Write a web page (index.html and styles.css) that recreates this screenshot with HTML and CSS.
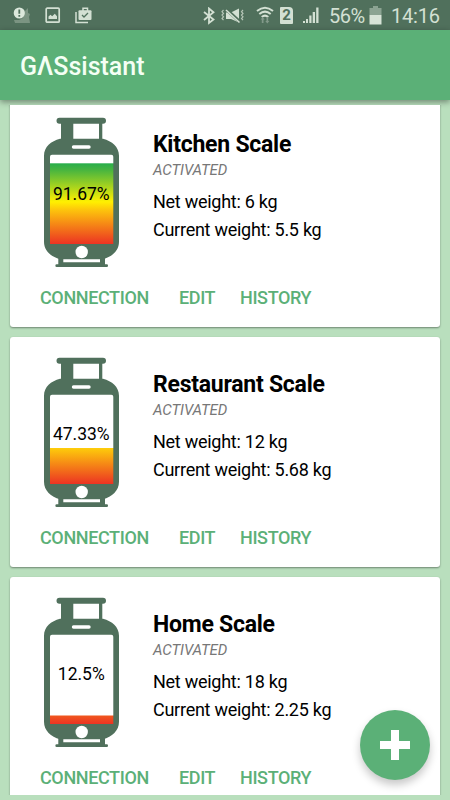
FILE: index.html
```html
<!DOCTYPE html>
<html lang="en">
<head>
  <meta charset="UTF-8" />
  <meta name="viewport" content="width=device-width, initial-scale=1.0"/>
  <title>GΛSsistant</title>
  <link rel="stylesheet" href="styles.css">
</head>
<body>
  <!-- shared shapes -->
  <svg class="defs" width="0" height="0">
    <defs>
      <linearGradient id="level" gradientUnits="userSpaceOnUse" x1="0" y1="46" x2="0" y2="127">
        <stop offset="0" stop-color="#27ad4c"/>
        <stop offset="0.08" stop-color="#45b440"/>
        <stop offset="0.48" stop-color="#fff000"/>
        <stop offset="0.58" stop-color="#fdc40c"/>
        <stop offset="1" stop-color="#ec3323"/>
      </linearGradient>
      <g id="bottle">
        <path fill="#50705c" d="M16.5 .7h43.5a3 3 0 0 1 0 6h-.7v16h-3.3v-16h-25.7v16h-12.300v-16h-1.500a3 3 0 0 1 0-6z"/>
        <path fill="#50705c" fill-rule="evenodd" d="M17 21.700h43c9 2.500 16 8 16 17v86c0 9-7 15-16 17.600h-43c-9-2.600-16-8.600-16-17.600v-86c0-9 7-14.500 16-17z
          M30.500 28.300a1.700 1.700 0 0 0 0 3.400h15.500a1.700 1.700 0 0 0 0-3.400z
          M9 37.700a2 2 0 0 0-2 2v87.300h63.300v-87.300a2 2 0 0 0-2-2z"/>
        <path fill="#50705c" d="M15.300 141h5v4.300h36.700v-4.300h5v6.300h1.700a1.300 1.300 0 0 1 0 2.700h-50a1.300 1.300 0 0 1 0-2.700h1.600z"/>
        <circle cx="38.700" cy="135" r="6.200" fill="#fff"/>
      </g>
    </defs>
  </svg>

  <div class="statusbar">
    <svg class="notify" width="18" height="18" viewBox="0 0 18 18">
      <path fill="#7b9482" d="M1 13h5l4-2 1-6 4-4v5l2 1-1 3 1 6H2z"/>
      <circle cx="6.300" cy="6" r="5.600" fill="#dce8dc"/>
      <path stroke="#50705c" stroke-width="1.800" d="M6.300 2.500v4.300M6.300 8v1.700"/>
    </svg>
    <svg class="picture" width="16" height="17" viewBox="0 0 16 17">
      <rect x="1.200" y="1.200" width="13" height="14" rx="1" fill="none" stroke="#d3e0d3" stroke-width="1.700"/>
      <path fill="#d3e0d3" d="M3.500 12V9.500l2-1.700 1.700 1.500 2.600-2.500 2.200 2.500V12z"/>
    </svg>
    <svg class="store" width="17" height="17" viewBox="0 0 17 17">
      <path fill="none" stroke="#d3e0d3" stroke-width="1.500" d="M1 5v10.500h12M8 4V1.300h4.500V4"/>
      <rect x="3.500" y="3.300" width="13" height="9.700" rx="1" fill="#d3e0d3"/>
      <path fill="none" stroke="#50705c" stroke-width="1.300" d="M7 8l2 2 4-4"/>
    </svg>
    <svg class="bluetooth" width="12" height="18" viewBox="0 0 12 18">
      <path fill="none" stroke="#d3e0d3" stroke-width="1.800" d="M1 5l9.500 7.500L6 16V1.500l4.500 3.800L1 13"/>
    </svg>
    <svg class="mute" width="24" height="16" viewBox="0 0 24 16">
      <path fill="none" stroke="#b5c6b7" stroke-width="1.200" d="M2.500 2l-1.500 1.700 1.500 1.700-1.500 1.700 1.500 1.700-1.500 1.700 1.500 1.700M22 2l-1.500 1.700 1.500 1.700-1.500 1.700 1.500 1.700-1.500 1.700 1.500 1.700"/>
      <path fill="#d3e0d3" d="M5 4.500h5L18 .5v14L10 11H5z"/>
      <path stroke="#50705c" stroke-width="3.200" d="M5.500 1.500L19 14"/>
      <path stroke="#d3e0d3" stroke-width="1.600" d="M5 2L18.500 14.500"/>
    </svg>
    <svg class="wifi" width="18" height="19" viewBox="0 0 18 19">
      <path fill="none" stroke="#d3e0d3" stroke-width="2" d="M1 5q8-6.500 16 0M3.300 8q5.700-4.700 11.400 0M5.700 11q3.300-2.700 6.600 0"/>
      <path fill="#82998a" d="M6.700 11l2 2.500h-1.200V17h-1.700v-3.500h-1.200zM11.300 17.500l-2-2.500h1.200v-4h1.700v4h1.200z"/>
    </svg>
    <span class="sim">2</span>
    <svg class="signal" width="17" height="17" viewBox="0 0 17 17">
      <path fill="#d3e0d3" d="M1 14h2v2H1zM4 12h2v4H4zM7.300 8.500h2.200V16H7.300zM10.700 5H13v11h-2.300zM14.200 .5h2.300V16h-2.300z"/>
    </svg>
    <span class="percent">56%</span>
    <svg class="battery" width="13" height="19" viewBox="0 0 13 19">
      <path fill="#8ba392" d="M4 0h5v2h3.500v7H.5V2H4z"/>
      <path fill="#d7e3d7" d="M.5 9h12v9.500H.5z"/>
    </svg>
    <span class="clock">14:16</span>
  </div>

  <header class="toolbar">
    <h1>GΛSsistant</h1>
  </header>

  <main class="list">
    <section class="card">
      <div class="info">
        <svg class="gas" width="77" height="152" viewBox="0 0 77 152">
          <rect x="6" y="46.300" width="65" height="81" fill="url(#level)"/>
          <use href="#bottle"/>
          <text x="38.300" y="82.700">91.67%</text>
        </svg>
        <div class="details">
          <h2>Kitchen Scale</h2>
          <p class="state">ACTIVATED</p>
          <p>Net weight: 6 kg</p>
          <p>Current weight: 5.5 kg</p>
        </div>
      </div>
      <div class="actions">
        <a class="connection">CONNECTION</a>
        <a class="edit">EDIT</a>
        <a>HISTORY</a>
      </div>
    </section>

    <section class="card">
      <div class="info">
        <svg class="gas" width="77" height="152" viewBox="0 0 77 152">
          <rect x="6" y="91" width="65" height="36.300" fill="url(#level)"/>
          <use href="#bottle"/>
          <text x="38.300" y="82.700">47.33%</text>
        </svg>
        <div class="details">
          <h2>Restaurant Scale</h2>
          <p class="state">ACTIVATED</p>
          <p>Net weight: 12 kg</p>
          <p>Current weight: 5.68 kg</p>
        </div>
      </div>
      <div class="actions">
        <a class="connection">CONNECTION</a>
        <a class="edit">EDIT</a>
        <a>HISTORY</a>
      </div>
    </section>

    <section class="card">
      <div class="info">
        <svg class="gas" width="77" height="152" viewBox="0 0 77 152">
          <rect x="6" y="118.500" width="65" height="8.800" fill="url(#level)"/>
          <use href="#bottle"/>
          <text x="38.300" y="82.700">12.5%</text>
        </svg>
        <div class="details">
          <h2>Home Scale</h2>
          <p class="state">ACTIVATED</p>
          <p>Net weight: 18 kg</p>
          <p>Current weight: 2.25 kg</p>
        </div>
      </div>
      <div class="actions">
        <a class="connection">CONNECTION</a>
        <a class="edit">EDIT</a>
        <a>HISTORY</a>
      </div>
    </section>
  </main>

  <button class="fab" aria-label="Add scale">
    <svg width="30" height="30" viewBox="0 0 30 30">
      <path fill="#fff" d="M11 0h8v11h11v8H19v11h-8V19H0v-8h11z"/>
    </svg>
  </button>
</body>
</html>
```
FILE: styles.css
```css
* {
  box-sizing: border-box;
}
body {
  margin: 0;
  height: 800px;
  display: flex;
  flex-direction: column;
  overflow: hidden;
  background: #b9dfbd;
  font-family: Roboto, "Liberation Sans", sans-serif;
}
h1, h2, p {
  margin: 0;
}
.defs {
  position: absolute;
}
.statusbar {
  display: flex;
  align-items: center;
  flex: none;
  height: 30px;
  padding: 1px 10px 0 13px;
  background: #50705c;
  color: #d3e0d3;
  font-size: 20px;
}
.statusbar svg {
  flex: none;
}
.picture {
  margin-left: 14px;
}
.store {
  margin-left: 14px;
}
.bluetooth {
  margin-left: auto;
}
.mute {
  margin-left: 6px;
}
.wifi {
  margin-left: 11px;
}
.sim {
  width: 13px;
  height: 17px;
  margin-left: 6px;
  border-radius: 1px 4px 1px 1px;
  background: #d3e0d3;
  color: #50705c;
  font-size: 15px;
  font-weight: bold;
  line-height: 17px;
  text-align: center;
}
.signal {
  margin-left: 9px;
}
.percent {
  margin-left: 10px;
  width: 36px;
  letter-spacing: -0.5px;
}
.battery {
  margin-left: 4px;
}
.clock {
  width: 49px;
  margin-left: 9px;
  letter-spacing: -0.2px;
}
.toolbar {
  display: flex;
  align-items: center;
  flex: none;
  height: 70px;
  padding: 2px 20px 0;
  background: #5bb077;
  box-shadow: 0 2px 6px rgba(0, 0, 0, 0.4);
}
.toolbar h1 {
  color: #f4fff4;
  font-size: 25px;
  font-weight: 500;
}
.list {
  height: 690px;
  margin-top: 5px;
  padding: 0 10px;
  overflow: hidden;
}
.card {
  height: 230px;
  margin-bottom: 10px;
  padding: 20px 20px 0 33px;
  border-radius: 3px;
  background: #fff;
  box-shadow: 0 1px 2px rgba(0, 0, 0, 0.4);
}
/* list is scrolled a little */
.card:first-child {
  margin-top: -8px;
}
.info {
  display: flex;
}
.gas text {
  font-size: 17.5px;
  text-anchor: middle;
}
.details {
  margin-left: 33px;
  padding-top: 13px;
}
.details h2 {
  font-size: 23px;
  font-weight: bold;
  letter-spacing: -0.25px;
  line-height: 30px;
}
.details p {
  font-size: 18px;
  letter-spacing: -0.26px;
  line-height: 28px;
}
.details .state {
  margin-bottom: 8px;
  color: #777;
  font-size: 15px;
  font-style: italic;
  letter-spacing: -0.1px;
  line-height: 20px;
}
.actions {
  display: flex;
  margin: 18px 0 0 -3px;
  color: #5bb077;
  font-size: 18px;
  font-weight: 500;
  letter-spacing: -0.38px;
  line-height: 22px;
}
.connection {
  width: 139px;
}
.edit {
  width: 61px;
}
.fab {
  position: absolute;
  right: 20px;
  bottom: 20px;
  display: flex;
  align-items: center;
  justify-content: center;
  width: 70px;
  height: 70px;
  padding: 0;
  border: none;
  border-radius: 50%;
  background: #5bb077;
  box-shadow: 0 5px 8px rgba(0, 0, 0, 0.22);
}
```
